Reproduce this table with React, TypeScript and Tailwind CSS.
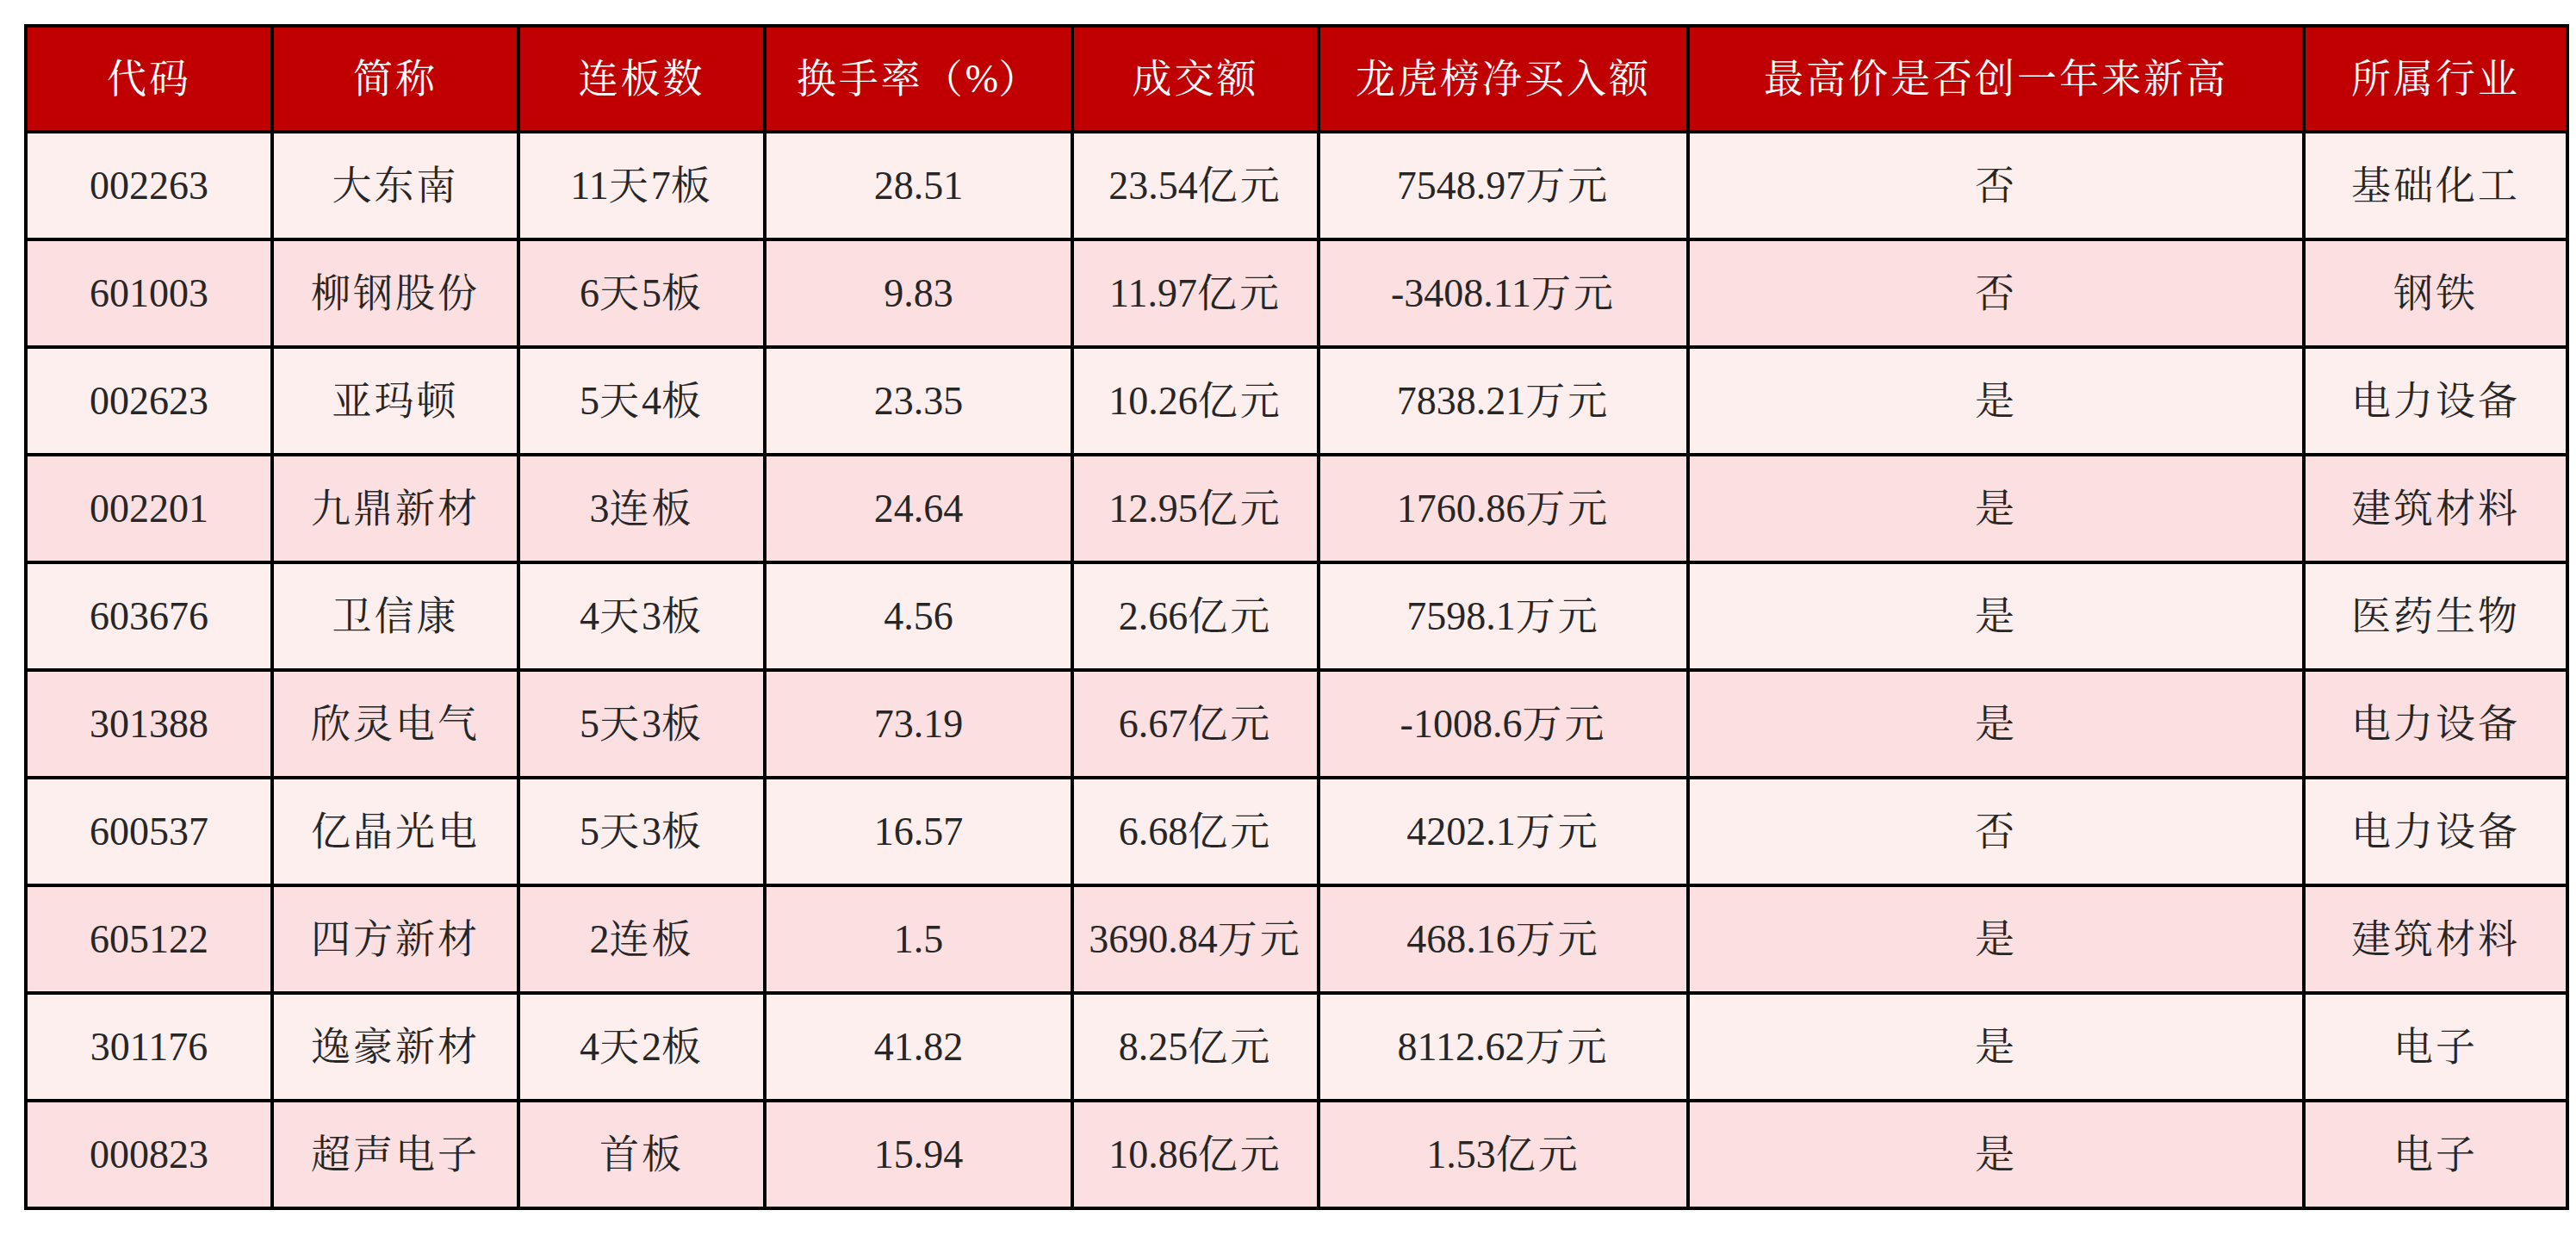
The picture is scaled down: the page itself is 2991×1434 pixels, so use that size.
import React from "react";

const headers = [
  "代码",
  "简称",
  "连板数",
  "换手率（%）",
  "成交额",
  "龙虎榜净买入额",
  "最高价是否创一年来新高",
  "所属行业",
];

const rows: string[][] = [
  ["002263", "大东南", "11天7板", "28.51", "23.54亿元", "7548.97万元", "否", "基础化工"],
  ["601003", "柳钢股份", "6天5板", "9.83", "11.97亿元", "-3408.11万元", "否", "钢铁"],
  ["002623", "亚玛顿", "5天4板", "23.35", "10.26亿元", "7838.21万元", "是", "电力设备"],
  ["002201", "九鼎新材", "3连板", "24.64", "12.95亿元", "1760.86万元", "是", "建筑材料"],
  ["603676", "卫信康", "4天3板", "4.56", "2.66亿元", "7598.1万元", "是", "医药生物"],
  ["301388", "欣灵电气", "5天3板", "73.19", "6.67亿元", "-1008.6万元", "是", "电力设备"],
  ["600537", "亿晶光电", "5天3板", "16.57", "6.68亿元", "4202.1万元", "否", "电力设备"],
  ["605122", "四方新材", "2连板", "1.5", "3690.84万元", "468.16万元", "是", "建筑材料"],
  ["301176", "逸豪新材", "4天2板", "41.82", "8.25亿元", "8112.62万元", "是", "电子"],
  ["000823", "超声电子", "首板", "15.94", "10.86亿元", "1.53亿元", "是", "电子"],
];

const fontStack =
  '"Liberation Serif", "Noto Serif CJK SC", "Noto Sans CJK SC", serif';

function Text({ s }: { s: string }) {
  const parts = s.match(/[\u3000-\u9fff\uff00-\uffef]+|[^\u3000-\u9fff\uff00-\uffef]+/g) || [];
  return (
    <>
      {parts.map((p, i) =>
        /[\u3000-\u9fff\uff00-\uffef]/.test(p) ? (
          <span key={i} className="tracking-[3px]">
            {p}
          </span>
        ) : (
          <span key={i}>{p}</span>
        )
      )}
    </>
  );
}

export default function App() {
  return (
    <div className="w-[2991px] h-[1434px] bg-white pt-[28px] pl-[28px]">
      <div
        className="grid w-fit bg-black p-[4px] gap-[4px] grid-cols-[282px_282px_282px_353px_282px_425px_711px_302px]"
        style={{ fontFamily: fontStack }}
      >
        {headers.map((h, i) => (
          <div
            key={"h" + i}
            className="h-[119px] bg-[#C00000] text-white text-[46px] leading-none flex items-center justify-center whitespace-nowrap"
          >
            <Text s={h} />
          </div>
        ))}
        {rows.map((r, ri) =>
          r.map((c, ci) => (
            <div
              key={ri + "-" + ci}
              className={
                "h-[121px] text-[#262626] text-[46px] leading-none flex items-center justify-center whitespace-nowrap " +
                (ri % 2 === 0 ? "bg-[#FDEFEE]" : "bg-[#FCDFE0]")
              }
            >
              <Text s={c} />
            </div>
          ))
        )}
      </div>
    </div>
  );
}
